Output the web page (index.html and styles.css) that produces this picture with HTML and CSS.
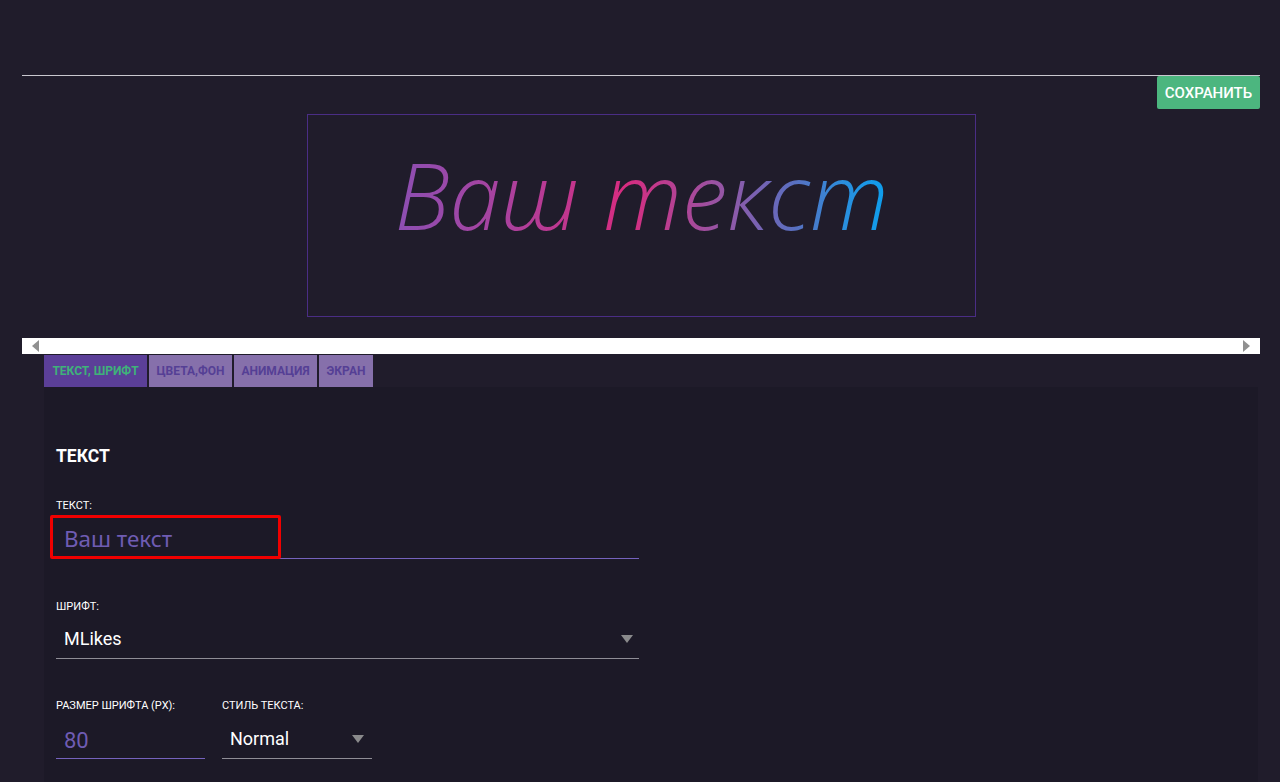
FILE: index.html
```html
<!DOCTYPE html>
<html lang="ru">
<head>
    <meta charset="utf-8">
    <title>Текст</title>
    <link rel="stylesheet" href="styles.css">
</head>
<body>
<div class="page">
    <div class="top_line"></div>
    <div class="save_row">
        <button class="save_btn">СОХРАНИТЬ</button>
    </div>
    <div class="preview">
        <span class="preview_text">Ваш текст</span>
    </div>
    <div class="hscroll">
        <span class="arrow_left"></span>
        <span class="arrow_right"></span>
    </div>
    <div class="tabs">
        <div class="tab tab_active tab_text">ТЕКСТ, ШРИФТ</div>
        <div class="tab tab_colors">ЦВЕТА,ФОН</div>
        <div class="tab tab_anim">АНИМАЦИЯ</div>
        <div class="tab tab_screen">ЭКРАН</div>
    </div>
    <div class="panel">
        <h2 class="section">ТЕКСТ</h2>

        <div class="field field_text">
            <label class="label">ТЕКСТ:</label>
            <div class="input input_text">Ваш текст</div>
            <div class="highlight"></div>
        </div>

        <div class="field field_font">
            <label class="label">ШРИФТ:</label>
            <div class="select select_font">
                <span>MLikes</span>
                <span class="caret"></span>
            </div>
        </div>

        <div class="field_row">
            <div class="field field_size">
                <label class="label">РАЗМЕР ШРИФТА (PX):</label>
                <div class="input input_size">80</div>
            </div>
            <div class="field field_style">
                <label class="label">СТИЛЬ ТЕКСТА:</label>
                <div class="select select_style">
                    <span>Normal</span>
                    <span class="caret"></span>
                </div>
            </div>
        </div>
    </div>
</div>
</body>
</html>
```

FILE: styles.css
```css
html, body {
    margin: 0;
    height: 782px;
    overflow: hidden;
    background-color: #201c2b;
}

body {
    font-family: Roboto, "Liberation Sans", sans-serif;
    color: #fff;
}

.page {
    padding: 75px 20px 0 22px;
}

.top_line {
    height: 1px;
    background-color: #c9c7cf;
}

.save_row {
    display: flex;
    justify-content: flex-end;
}

.save_btn {
    width: 103px;
    height: 33px;
    padding: 0;
    border: 0;
    border-radius: 2px;
    background-color: #4cb67f;
    color: #fff;
    font-family: Roboto, sans-serif;
    font-size: 15px;
    font-weight: 500;
}

.preview {
    box-sizing: border-box;
    display: flex;
    justify-content: center;
    width: 669px;
    height: 203px;
    margin: 5px 0 21px 285px;
    border: 1px solid #4a2d85;
}

.preview_text {
    align-self: flex-start;
    margin-top: 25px;
    padding: 0 6px 10px;
    font-family: "Open Sans", sans-serif;
    font-style: italic;
    font-size: 92px;
    line-height: 110px;
    font-weight: 300;
    color: transparent;
    background: linear-gradient(90deg, #8a50b4 0%, #a8429f 22%, #d72c80 47%, #8d5aa9 68%, #5a6fc0 80%, #2a8fde 90%, #07a2f0 100%);
    -webkit-background-clip: text;
    background-clip: text;
}

.hscroll {
    display: flex;
    justify-content: space-between;
    align-items: center;
    height: 16px;
    margin-bottom: 1px;
    padding: 0 10px;
    background-color: #fff;
}

.arrow_left,
.arrow_right {
    width: 0;
    height: 0;
    border-top: 6px solid transparent;
    border-bottom: 6px solid transparent;
}

.arrow_left {
    border-right: 7px solid #909090;
}

.arrow_right {
    border-left: 7px solid #909090;
}

.tabs {
    display: flex;
    gap: 2px;
    margin-left: 22px;
}

.tab {
    box-sizing: border-box;
    height: 32px;
    line-height: 32px;
    text-align: center;
    font-size: 12px;
    font-weight: 700;
    background-color: #8670ab;
    color: #553f95;
}

.tab_text {
    width: 103px;
}

.tab_colors,
.tab_anim {
    width: 83px;
}

.tab_screen {
    width: 54px;
}

.tab_active {
    background-color: #5b3f98;
    color: #3fb27a;
}

.panel {
    width: 1214px;
    height: 395px;
    margin-left: 22px;
    padding: 59px 0 0 12px;
    box-sizing: border-box;
    background-color: #1c1927;
}

.section {
    margin: 0;
    font-size: 17.5px;
    line-height: 20px;
    font-weight: 700;
}

.field {
    position: relative;
}

.field_text {
    width: 583px;
    margin-top: 33px;
}

.field_font {
    width: 583px;
    margin-top: 41px;
}

.field_row {
    display: flex;
    gap: 17px;
    margin-top: 40px;
}

.field_size {
    width: 149px;
}

.field_style {
    width: 150px;
}

.label {
    display: block;
    font-size: 11px;
    line-height: 14px;
    font-weight: 400;
}

.input,
.select {
    box-sizing: border-box;
    height: 41px;
    margin-top: 5px;
    padding-left: 8px;
    line-height: 38px;
    border-bottom: 1px solid #7562bd;
}

.input {
    color: #6f5cb3;
}

.input_text {
    padding-top: 2px;
    font-family: "Noto Sans", sans-serif;
    font-size: 22.4px;
}

.input_size {
    padding-top: 4px;
    font-size: 22px;
    font-weight: 400;
}

.select {
    display: flex;
    justify-content: space-between;
    align-items: center;
    height: 40px;
    padding-right: 6px;
    font-size: 18px;
    border-bottom-color: #8f8d96;
}

.field_row .select {
    height: 41px;
    padding-top: 1px;
}

.select_style {
    padding-right: 8px;
}

.caret {
    width: 0;
    height: 0;
    border-left: 6px solid transparent;
    border-right: 6px solid transparent;
    border-top: 8px solid #8a8a8c;
}

/* red annotation frame over the text input */
.highlight {
    position: absolute;
    left: -6px;
    top: 16px;
    width: 225px;
    height: 38px;
    border: 3px solid #f00000;
    border-radius: 2px;
}
```
